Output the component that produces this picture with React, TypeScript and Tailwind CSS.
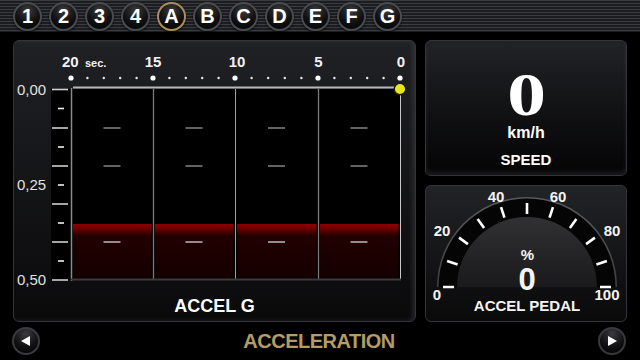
import React from "react";

const tabs = ["1", "2", "3", "4", "A", "B", "C", "D", "E", "F", "G"];

function TopCircle({ label, active }: { label: string; active: boolean }) {
  return (
    <div
      className={
        "w-[29px] h-[29px] rounded-full flex items-center justify-center border-2 bg-[radial-gradient(circle_at_50%_25%,#3a3a3d_0%,#111113_55%,#000_100%)] shadow-[0_1px_2px_rgba(0,0,0,0.9)] " +
        (active ? "border-[#a88f58]" : "border-[#4a4b50]")
      }
    >
      <span className="text-white font-bold text-[20px] leading-none">{label}</span>
    </div>
  );
}

function NavButton({ dir }: { dir: "left" | "right" }) {
  return (
    <div className="w-[28px] h-[28px] rounded-full border-2 border-[#3a3a3e] bg-[radial-gradient(circle_at_50%_20%,#3b3b3f_0%,#121214_55%,#000_100%)] flex items-center justify-center">
      <svg width="12" height="12" viewBox="0 0 12 12">
        {dir === "left" ? (
          <polygon points="10,1 10,11 1,6" fill="#fff" />
        ) : (
          <polygon points="2,1 2,11 11,6" fill="#fff" />
        )}
      </svg>
    </div>
  );
}

function Chart() {
  const cols = [
    [71, 153],
    [153, 235],
    [235, 318],
    [318, 400],
  ];
  const bigDots = [71, 153, 235, 318, 400];
  const smallDots: number[] = [];
  for (let i = 0; i < 4; i++) {
    const a = bigDots[i];
    const b = bigDots[i + 1];
    for (let j = 1; j < 5; j++) smallDots.push(a + ((b - a) * j) / 5);
  }
  const longTicks = [89.5, 128, 166, 204, 242, 280];
  const shortTicks = [108.5, 147, 185, 223, 261];
  return (
    <svg width="401" height="249" viewBox="14 41 401 249" className="block">
      <defs>
        <linearGradient id="redbar" x1="0" y1="0" x2="0" y2="1">
          <stop offset="0" stopColor="#8c0000" />
          <stop offset="0.06" stopColor="#7c0000" />
          <stop offset="0.22" stopColor="#220000" />
          <stop offset="1" stopColor="#150000" />
        </linearGradient>
      </defs>
      <g fill="#f2f2f2" fontFamily="'Liberation Sans', Arial, sans-serif" fontWeight="bold">
        <text x="62" y="67" fontSize="15">20</text>
        <text x="85" y="67" fontSize="11">sec.</text>
        <text x="153" y="67" fontSize="15" textAnchor="middle">15</text>
        <text x="237" y="67" fontSize="15" textAnchor="middle">10</text>
        <text x="318.5" y="67" fontSize="15" textAnchor="middle">5</text>
        <text x="401" y="67" fontSize="15" textAnchor="middle">0</text>
      </g>
      {bigDots.map((x) => (
        <circle key={"b" + x} cx={x} cy={78} r={2.6} fill="#fff" />
      ))}
      {smallDots.map((x) => (
        <circle key={"s" + x} cx={x} cy={78} r={1.2} fill="#e8e8e8" />
      ))}
      <g fill="#e0e0e0" fontFamily="'Liberation Sans', Arial, sans-serif" fontSize="15">
        <text x="17" y="95">0,00</text>
        <text x="17" y="190">0,25</text>
        <text x="17" y="285">0,50</text>
      </g>
      <rect x="51" y="89" width="350" height="191" fill="#000" />
      {cols.map(([a, b], i) => (
        <rect key={"r" + i} x={a + 2} y={224} width={b - a - 3.5} height={54} fill="url(#redbar)" />
      ))}
      {cols.map(([a, b], i) => {
        const c = (a + b) / 2;
        return (
          <g key={"d" + i}>
            <line x1={c - 8.5} x2={c + 8.5} y1={128} y2={128} stroke="#9a9a9a" strokeWidth="1.3" />
            <line x1={c - 8.5} x2={c + 8.5} y1={166} y2={166} stroke="#9a9a9a" strokeWidth="1.3" />
            <line x1={c - 8.5} x2={c + 8.5} y1={242} y2={242} stroke="#d8d8d8" strokeWidth="1.3" />
          </g>
        );
      })}
      {longTicks.map((y) => (
        <line key={"lt" + y} x1={52} x2={68} y1={y} y2={y} stroke="#cfcfcf" strokeWidth="1.6" />
      ))}
      {shortTicks.map((y) => (
        <line key={"st" + y} x1={58} x2={64} y1={y} y2={y} stroke="#f0f0f0" strokeWidth="1.6" />
      ))}
      <line x1="71.5" x2="71.5" y1="88" y2="281" stroke="#8a8a8a" strokeWidth="1.5" />
      <line x1="153.5" x2="153.5" y1="89" y2="280" stroke="#7a7a7a" strokeWidth="1.3" />
      <line x1="235.5" x2="235.5" y1="89" y2="280" stroke="#a0a0a0" strokeWidth="1" />
      <line x1="318.5" x2="318.5" y1="89" y2="280" stroke="#7a7a7a" strokeWidth="1.3" />
      <line x1="400.5" x2="400.5" y1="89" y2="280" stroke="#c8c8c8" strokeWidth="1" />
      <line x1="71" x2="401" y1="279.5" y2="279.5" stroke="#3c3c3e" strokeWidth="2" />
      <line x1="73" x2="396" y1="87.6" y2="87.6" stroke="#b8b8b8" strokeWidth="2" />
      <circle cx="400" cy="89" r="5.8" fill="#e6e61c" stroke="#1a1a1a" strokeWidth="1.5" />
    </svg>
  );
}

function Gauge() {
  const cx = 527;
  const cy = 287;
  const ticks = Array.from({ length: 11 }, (_, i) => {
    const ang = ((180 - 18 * i) * Math.PI) / 180;
    const r1 = 73;
    const r2 = 84;
    return {
      x1: cx + r1 * Math.cos(ang),
      y1: cy - r1 * Math.sin(ang),
      x2: cx + r2 * Math.cos(ang),
      y2: cy - r2 * Math.sin(ang),
    };
  });
  return (
    <svg width="200" height="135" viewBox="426 186 200 135" className="block">
      <defs>
        <clipPath id="half">
          <rect x="426" y="186" width="200" height={cy - 186} />
        </clipPath>
        <linearGradient id="dome" x1="0" y1="0" x2="0" y2="1">
          <stop offset="0" stopColor="#313134" />
          <stop offset="0.45" stopColor="#1c1c1e" />
          <stop offset="1" stopColor="#0c0c0d" />
        </linearGradient>
        <linearGradient id="rim" x1="0" y1="0" x2="0" y2="1">
          <stop offset="0" stopColor="#5a5a5e" />
          <stop offset="1" stopColor="#2a2a2c" />
        </linearGradient>
      </defs>
      <g clipPath="url(#half)">
        <circle cx={cx} cy={cy} r={90} fill="url(#rim)" />
        <circle cx={cx} cy={cy} r={88.5} fill="#050505" />
        <circle cx={cx} cy={cy} r={70} fill="url(#dome)" />
      </g>
      {ticks.map((t, i) => (
        <line key={i} x1={t.x1} y1={t.y1} x2={t.x2} y2={t.y2} stroke="#fff" strokeWidth="2.6" />
      ))}
      <g fill="#f4f4f4" fontFamily="'Liberation Sans', Arial, sans-serif" fontWeight="bold" fontSize="15" textAnchor="middle">
        <text x="442" y="236">20</text>
        <text x="496" y="202">40</text>
        <text x="558" y="202">60</text>
        <text x="612" y="236">80</text>
        <text x="437" y="300">0</text>
        <text x="607" y="300">100</text>
        <text x="527.5" y="260">%</text>
        <text x="527" y="290" fontSize="31">0</text>
        <text x="527" y="311">ACCEL PEDAL</text>
      </g>
    </svg>
  );
}

export default function App() {
  return (
    <div className="w-[640px] h-[360px] bg-black flex flex-col overflow-hidden font-['Liberation_Sans',Arial,sans-serif]">
      <div className="h-[32px] flex items-center pl-[13px] gap-[7px] bg-[repeating-linear-gradient(to_bottom,#3b3c42_0px,#3b3c42_1px,#1c1d21_1px,#1c1d21_3px)] shadow-[0_1px_0_#000]">
        {tabs.map((t) => (
          <TopCircle key={t} label={t} active={t === "A"} />
        ))}
      </div>

      <div className="flex pt-[8px] pl-[13px] gap-[9px]">
        <div className="w-[403px] h-[282px] rounded-[6px] border border-[#34353a] bg-gradient-to-b from-[#202125] to-[#0a0a0b] shadow-[inset_-3px_0_4px_rgba(80,80,85,0.35)] flex flex-col">
          <Chart />
          <div className="flex-1 flex items-center justify-center">
            <span className="text-white font-bold text-[18px] leading-none">ACCEL G</span>
          </div>
        </div>
        <div className="w-[202px] flex flex-col gap-[9px]">
          <div className="h-[136px] rounded-[6px] border border-[#34353a] bg-gradient-to-b from-[#222326] to-[#050506] shadow-[inset_0_-3px_4px_rgba(90,90,95,0.25)] flex flex-col items-center pt-[31px]">
            <span className="block h-[44px] text-white font-bold text-[62px] leading-[44px] scale-x-[1.25] font-['Liberation_Serif','Times_New_Roman',serif]">0</span>
            <span className="text-white font-bold text-[16px] leading-none mt-[9px]">km/h</span>
            <span className="text-white font-bold text-[15px] leading-none mt-[11px]">SPEED</span>
          </div>
          <div className="h-[137px] rounded-[6px] border border-[#34353a] bg-gradient-to-b from-[#222326] to-[#0a0a0b] overflow-hidden">
            <Gauge />
          </div>
        </div>
      </div>

      <div className="flex-1 flex items-center justify-between pl-[12px] pr-[14px]">
        <NavButton dir="left" />
        <span className="text-[#b39c66] font-bold text-[20px] tracking-[-0.5px] leading-none">ACCELERATION</span>
        <NavButton dir="right" />
      </div>
    </div>
  );
}
